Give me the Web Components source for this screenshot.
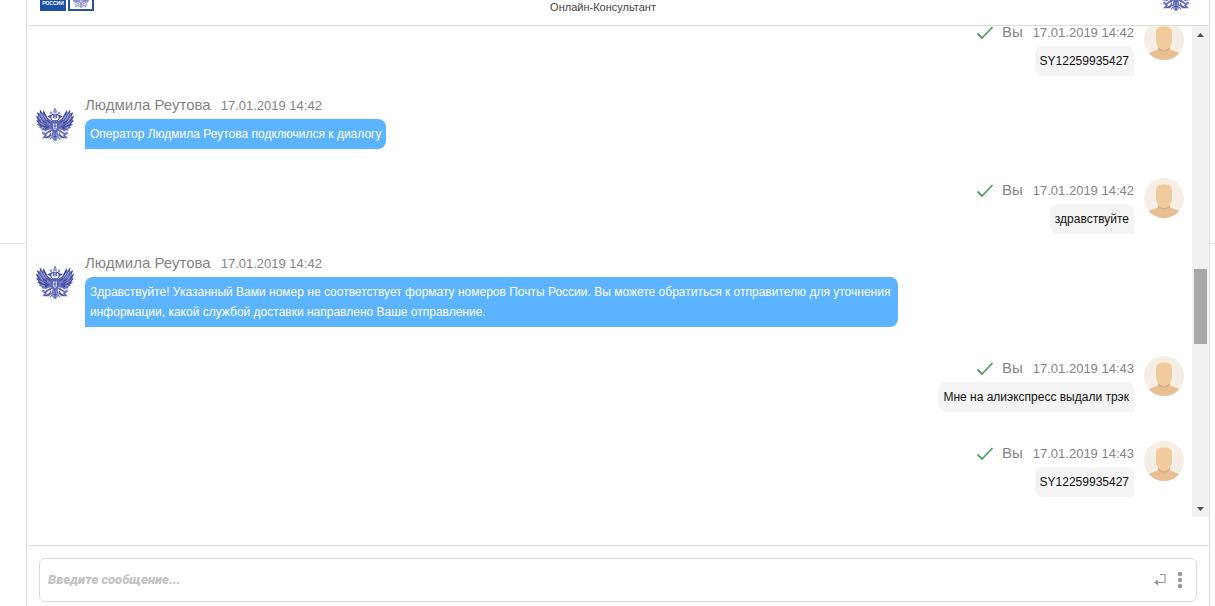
<!DOCTYPE html>
<html lang="ru">
<head>
<meta charset="utf-8">
<meta name="viewport" content="width=device-width, initial-scale=1">
<title>Онлайн-Консультант</title>
<style>
  html, body { height: 100%; margin: 0; }
  body { background: #fff; font-family: "Liberation Sans", Arial, sans-serif; overflow: hidden; }
</style>
</head>
<body>
<chat-page></chat-page>

<script>
const define = (name, html) => {
  const template = document.createElement('template');
  template.innerHTML = html;
  customElements.define(name, class extends HTMLElement {
    constructor() {
      super();
      this.attachShadow({ mode: 'open' }).append(template.content.cloneNode(true));
    }
  });
};

/* One half of the emblem; the other half is its mirror image */
const eagleHalf = `
  <path fill="#6a72bd" d="M17.500 18C15 18.500 13 16 11.500 12.500L8.500 7L7.500 10L5 6.500L4.800 10.500L2 9L3.200 13.500L1 12.500L2.500 17L1 17.500L3.500 20.500L2 21.500L5 23.500L4 25L7 25.800L6.500 27.500L9.500 27.500L10 28.500L13 27L17.500 26Z"/>
  <path fill="none" stroke="#2f3790" stroke-width=".9" d="M5 7.500L9 15L15.500 20M2.500 10L7 17.500L15 22M1.500 13.500L6 20L14 24M2 18L7 22.500L13 25M4 21.500L8.500 25L12 26M8.500 8.500L11.500 15L16.500 18.500"/>
  <path fill="none" stroke="#c9cdec" stroke-width=".7" d="M6 10.500L9.500 17M3.800 13L7.500 19M9 12.500L12 17M4.500 19.500L9.500 22.500M6.500 24L10 25.500M12 20L15 22"/>
  <path fill="none" stroke="#424aa0" stroke-width="1.200" d="M18.500 18C15 17 14.800 12.500 17.500 11.500C19.300 11.200 19.300 14 18 15M16 12.500L13.500 13.500L15 14.500"/>
  <path fill="none" stroke="#6069b8" stroke-width="1.700" d="M17 27C14 27.500 12.500 30 10 31.500L8 30M11.500 31.500L9 34.500L13.500 34.500L16.500 31.500M16 28.500L13 29"/>
  <circle cx="8.500" cy="30" r="1.600" fill="#858cca"/>
  <path fill="none" stroke="#3b449a" stroke-width="1" d="M16 30L14 33L11 34.500M18 29L17 34L15 36.500"/>`;

/* Double-headed eagle emblem */
define('post-eagle', `
<style>
  :host { display: block; width: 40px; height: 40px; flex: none; }
  svg { display: block; width: 100%; height: 100%; }
</style>
<svg viewBox="0 0 40 40" aria-hidden="true">
  <g>${eagleHalf}</g>
  <g transform="translate(40 0) scale(-1 1)">${eagleHalf}</g>
  <path fill="#5e67b5" d="M17 18Q20 16 23 18L24 23L22.500 29L20 31L17.500 29L16 23Z"/>
  <path fill="#d3d6f0" d="M18 20.500H22V25L20 27.500L18 25Z"/>
  <path fill="none" stroke="#4c55a9" stroke-width=".9" d="M20 20V26M18.500 23H21.500"/>
  <path fill="#8d94cf" d="M18.500 30H21.500L23.500 34L22 37L20 38.500L18 37L16.500 34Z"/>
  <path fill="none" stroke="#3b449a" stroke-width=".8" d="M20 30V37M18.300 33.500H21.700"/>
  <g fill="#959bd3"><circle cx="20" cy="8.500" r="2"/><circle cx="16" cy="10" r="1.400"/><circle cx="24" cy="10" r="1.400"/></g>
  <path fill="none" stroke="#5c65b3" stroke-width=".8" d="M20 5V7M19 6H21M18 10.500L20 12L22 10.500M20 12V16"/>
</svg>`);

define('user-face', `
<style>
  :host { display: block; width: 40px; height: 40px; flex: none; }
  svg { display: block; width: 100%; height: 100%; border-radius: 50%; }
</style>
<svg viewBox="0 0 40 40" aria-hidden="true">
  <rect width="40" height="40" fill="#f4eee4"/>
  <path fill="#e8be93" d="M14 24H26V29C28 31 33 31.500 37 34V40H3V34C7 31.500 12 31 14 29Z"/>
  <path fill="#dbae82" d="M14 25H26V29C24 31 22 31.400 20 31.400S16 31 14 29Z"/>
  <path fill="#f0cc9d" d="M12 13C12 8 14.500 6.500 20 6.500S28 8 28 13L28 20C28 25.500 24.500 30 20 30S12 25.500 12 20Z"/>
</svg>`);

define('brand-logo', `
<style>
  :host { display: flex; gap: 2px; }
  .word, .sign { box-sizing: border-box; width: 26px; height: 26px; display: flex; justify-content: center; }
  .word { align-items: flex-end; background: #1d4fa3; color: #fff; font: bold 5px/8px "Liberation Sans", Arial, sans-serif; padding-bottom: 4px; }
  .sign { align-items: flex-end; border: 2px solid #2754a0; background: #fff; }
  post-eagle { width: 20px; height: 20px; opacity: .7; }
</style>
<span class="word">РОССИИ</span>
<span class="sign"><post-eagle></post-eagle></span>`);

/* The row is taller than the bar and is held at its bottom edge */
define('chat-header', `
<style>
  :host { display: grid; grid-template-columns: 1fr auto 1fr; align-items: end; align-content: end; box-sizing: border-box;
    height: 26px; padding: 0 13px; overflow: hidden; border-bottom: 1px solid #dcdcdc; }
  brand-logo { margin-bottom: 14px; }
  h1 { margin: 0 30px 10px 0; font-size: 11px; line-height: 16px; font-weight: 400; color: #444; }
  post-eagle { justify-self: end; margin-bottom: 12px; }
</style>
<brand-logo></brand-logo>
<h1><slot></slot></h1>
<post-eagle></post-eagle>`);

/* Message from the operator, on the left */
define('operator-message', `
<style>
  :host { display: flex; gap: 10px; margin-top: 19px; flex: none; }
  post-eagle { margin-top: 8px; }
  .body { flex: 1; display: flex; flex-direction: column; align-items: flex-start; gap: 4px; }
  .meta { display: flex; gap: 10px; align-items: baseline; height: 20px; color: #858585; font-size: 15px; line-height: 20px; }
  .date { font-size: 13px; }
  .bubble { box-sizing: border-box; max-width: 74%; padding: 5px; border-radius: 8px 8px 8px 0; background: #5cb3ff; color: #fff; font-size: 12px; line-height: 20px; }
</style>
<post-eagle></post-eagle>
<div class="body">
  <div class="meta"><span><slot name="name"></slot></span><span class="date"><slot name="date"></slot></span></div>
  <div class="bubble"><slot></slot></div>
</div>`);

/* Message from the visitor, on the right */
define('visitor-message', `
<style>
  :host { display: flex; gap: 10px; margin-top: 31px; flex: none; }
  .body { flex: 1; display: flex; flex-direction: column; align-items: flex-end; gap: 4px; }
  .meta { display: flex; align-items: baseline; gap: 10px; height: 20px; color: #858585; font-size: 15px; line-height: 20px; }
  .check { width: 18px; height: 14px; align-self: center; margin-right: -2px; }
  .date { font-size: 13px; }
  .bubble { box-sizing: border-box; max-width: 74%; padding: 5px; border-radius: 8px 8px 0 8px; background: #f4f4f4; color: #111; font-size: 12px; line-height: 20px; }
  user-face { margin-top: -2px; }
</style>
<div class="body">
  <div class="meta">
    <svg class="check" viewBox="0 0 18 14" role="img" aria-label="Доставлено"><path d="M1.500 8.500L6 13L16.500 2" fill="none" stroke="#4fa35c" stroke-width="1.800"/></svg>
    <span>Вы</span><span class="date"><slot name="date"></slot></span>
  </div>
  <div class="bubble"><slot></slot></div>
</div>
<user-face></user-face>`);

define('scroll-track', `
<style>
  :host { display: grid; grid-template-rows: 17px 226fr 75fr 156fr 17px; justify-items: center; align-items: center; width: 17px; background: #f1f1f1; flex: none; }
  svg { width: 7px; height: 4px; fill: #505050; }
  .thumb { grid-row: 3; width: 13px; height: 100%; background: #a8a8a8; }
  .down { grid-row: 5; }
</style>
<svg viewBox="0 0 7 4" aria-hidden="true"><path d="M0 4L3.500 0L7 4Z"/></svg>
<div class="thumb"></div>
<svg class="down" viewBox="0 0 7 4" aria-hidden="true"><path d="M0 0L3.500 4L7 0Z"/></svg>`);

/* Message list, kept at its newest entry */
define('message-list', `
<style>
  :host { display: flex; flex: 1; min-height: 0; margin-bottom: 28px; }
  .view { flex: 1; min-width: 0; overflow: hidden; display: flex; flex-direction: column; justify-content: flex-end; padding: 0 8px 20px; }
</style>
<div class="view" role="log"><slot></slot></div>
<scroll-track></scroll-track>`);

define('chat-composer', `
<style>
  :host { display: block; padding: 12px 12px 4px; border-top: 1px solid #dcdcdc; }
  .box { box-sizing: border-box; display: flex; align-items: center; height: 44px; padding: 0 8px; border: 1px solid #dcdcdc; border-radius: 6px; }
  input { flex: 1; min-width: 0; border: 0; outline: 0; padding: 0; background: none; font: italic 900 13px/22px Roboto, sans-serif; color: #444; }
  input::placeholder { color: #c4c4c4; opacity: 1; }
  button { display: grid; place-items: center; width: 16px; height: 24px; padding: 0; border: 0; background: none; color: #999; }
  button + button { margin-left: 4px; }
  svg { display: block; }
</style>
<form class="box">
  <input type="text" placeholder="Введите сообщение..." aria-label="Введите сообщение">
  <button type="button" aria-label="Отправить"><svg width="12" height="14" viewBox="0 0 12 14"><path d="M6 1.500H11V9.500H2" fill="none" stroke="currentColor" stroke-width="1.200"/><path d="M0 9.500L4 6.500V12.500Z" fill="currentColor"/></svg></button>
  <button type="button" aria-label="Меню"><svg width="6" height="18" viewBox="0 0 6 18" fill="currentColor"><circle cx="3" cy="3" r="2.200"/><circle cx="3" cy="9" r="2.200"/><circle cx="3" cy="15" r="2.200"/></svg></button>
</form>`);

define('chat-panel', `
<style>
  :host { display: flex; flex-direction: column; min-width: 0; min-height: 0; background: #fff; border: solid #dcdcdc; border-width: 0 1px; }
</style>
<slot></slot>`);

define('chat-page', `
<style>
  :host { display: grid; grid-template-columns: 26px minmax(0, 1fr) 5px; grid-template-rows: minmax(0, 1fr); height: 100vh; }
  .gutter::before { content: ""; display: block; box-sizing: border-box; height: 40.250%; border-bottom: 1px solid #e2e2e2; }
</style>
<div class="gutter"></div>
<chat-panel>
  <chat-header>Онлайн-Консультант</chat-header>
  <message-list>
    <visitor-message><span slot="date">17.01.2019 14:42</span>SY12259935427</visitor-message>
    <operator-message><span slot="name">Людмила Реутова</span><span slot="date">17.01.2019 14:42</span>Оператор Людмила Реутова подключился к диалогу</operator-message>
    <visitor-message><span slot="date">17.01.2019 14:42</span>здравствуйте</visitor-message>
    <operator-message><span slot="name">Людмила Реутова</span><span slot="date">17.01.2019 14:42</span>Здравствуйте! Указанный Вами номер не соответствует формату номеров Почты России. Вы можете обратиться к отправителю для уточнения информации, какой службой доставки направлено Ваше отправление.</operator-message>
    <visitor-message><span slot="date">17.01.2019 14:43</span>Мне на алиэкспресс выдали трэк</visitor-message>
    <visitor-message><span slot="date">17.01.2019 14:43</span>SY12259935427</visitor-message>
  </message-list>
  <chat-composer></chat-composer>
</chat-panel>
<div class="gutter"></div>`);
</script>
</body>
</html>
